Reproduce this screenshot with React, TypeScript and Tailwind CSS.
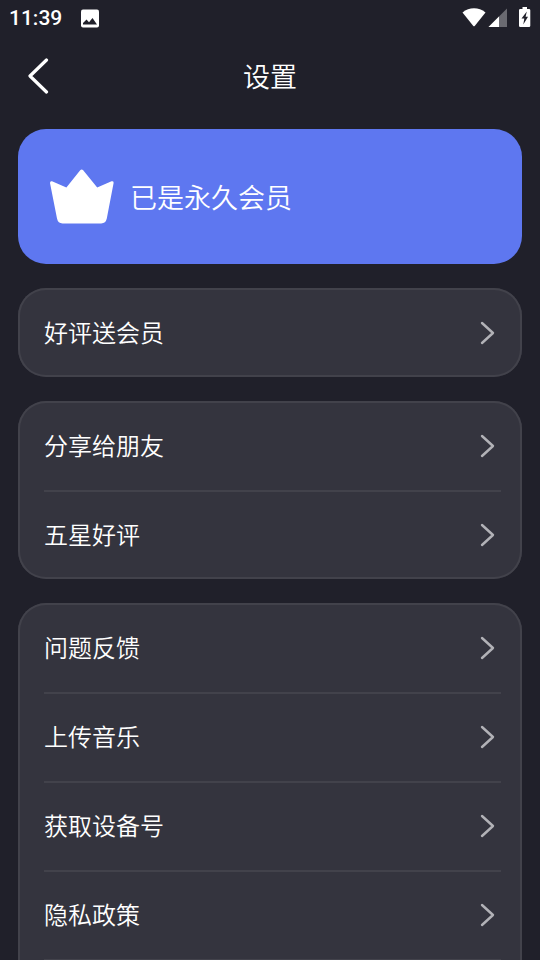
import { useState } from "react";
import { clsx } from "clsx";

interface SettingsGroup {
  items: string[];
  continues?: boolean;
}

const groups: SettingsGroup[] = [
  { items: ["好评送会员"] },
  { items: ["分享给朋友", "五星好评"] },
  { items: ["问题反馈", "上传音乐", "获取设备号", "隐私政策"], continues: true },
];

function StatusBar() {
  return (
    <div className="flex h-9 items-center justify-between px-[9px]">
      <div className="flex items-center gap-[19px]">
        <span className="font-[Roboto,sans-serif] text-[21px] font-medium leading-9">11:39</span>
        <svg width="19" height="19" viewBox="0 0 19 19" aria-hidden="true">
          <rect x="0" y="0.5" width="18" height="18" rx="2" fill="#fff" />
          <path d="M2 15.5V14L5.5 10.5 8 13.3 11.5 9 16 15.5Z" fill="#20202a" />
        </svg>
      </div>
      <div className="flex items-center">
        <svg width="24" height="20" viewBox="0 0 24 20" aria-hidden="true">
          <path d="M.5 4.5C4 1.6 7.8 .3 12 .3S20 1.6 23.5 4.5L12.7 18Q12 18.7 11.3 18Z" fill="#fff" />
        </svg>
        <svg className="ml-[2px]" width="20" height="20" viewBox="0 0 20 20" aria-hidden="true">
          <path d="M19 .5V19H.5Z" fill="#6a6a71" />
          <path d="M11 8.5V19H.5Z" fill="#fff" />
        </svg>
        <svg className="ml-[11px]" width="12" height="22" viewBox="0 0 12 22" aria-hidden="true">
          <path d="M3.5 0H8V2H10Q11.3 2 11.3 3.3V18.7Q11.3 20 10 20H1.3Q0 20 0 18.7V3.3Q0 2 1.3 2H3.5Z" fill="#fff" />
          <path d="M7.8 4.5 2.5 11.5H5.3L4.3 17.5 9 9.8H6.6Z" fill="#20202a" />
        </svg>
      </div>
    </div>
  );
}

function Crown() {
  return (
    <svg width="64" height="56" viewBox="0 0 64 56" fill="#fff" aria-hidden="true">
      <path d="M30.2 1.2Q31.7 -.4 33.2 1.2L47.2 18.6 61.5 12.3Q63.8 11.8 63.6 14L56.8 49.5Q55.7 54.4 51.2 54.4H12.5Q8 54.4 7 49.5L0 14Q0 11.8 2 12.3L16.4 18.6Z" />
    </svg>
  );
}

function Group({ items, continues }: SettingsGroup) {
  return (
    <ul
      className={clsx(
        "shrink-0 rounded-[28px] bg-[#34343e] px-[26px] pt-0.5 inset-ring-2 inset-ring-[#42424b]",
        continues && "pb-9"
      )}
    >
      {items.map((label, i) => (
        <li
          key={label}
          className={clsx(
            "-mr-[5px] border-[#42424b]",
            (continues || i < items.length - 1) && "border-b-2"
          )}
        >
          <button
            type="button"
            className="flex h-[87px] w-full items-center justify-between pr-[6px] pb-0.5 text-left text-2xl"
          >
            <span className="pb-0.5">{label}</span>
            <svg width="16" height="24" viewBox="0 0 16 24" fill="none" aria-hidden="true">
              <path
                d="M3 2 14 12 3 22"
                stroke="#b2b2b7"
                strokeWidth="2.4"
                strokeLinecap="round"
                strokeLinejoin="round"
              />
            </svg>
          </button>
        </li>
      ))}
    </ul>
  );
}

export default function App() {
  const [open, setOpen] = useState(true);

  if (!open) return null;

  return (
    <div className="flex h-screen flex-col overflow-hidden bg-[#20202a] font-['Noto_Sans_CJK_SC',sans-serif] font-[350] text-white">
      <StatusBar />
      <header className="grid h-[79px] grid-cols-[1fr_auto_1fr] items-center px-[26px]">
        <button type="button" aria-label="返回" onClick={() => setOpen(false)} className="justify-self-start">
          <svg width="24" height="36" viewBox="0 0 24 36" fill="none" aria-hidden="true">
            <path
              d="M20.5 2 4 18 20.5 34"
              stroke="#fff"
              strokeWidth="3.2"
              strokeLinecap="round"
              strokeLinejoin="round"
            />
          </svg>
        </button>
        <h1 className="text-[27px] leading-10">设置</h1>
      </header>
      <main className="flex min-h-0 flex-1 flex-col gap-6 px-[18px] pt-3.5">
        <section className="flex h-[135px] shrink-0 items-center gap-4 rounded-[28px] bg-[#5e77f0] px-8">
          <Crown />
          <p className="text-[27px] leading-10">已是永久会员</p>
        </section>
        {groups.map((group) => (
          <Group key={group.items[0]} {...group} />
        ))}
      </main>
    </div>
  );
}
